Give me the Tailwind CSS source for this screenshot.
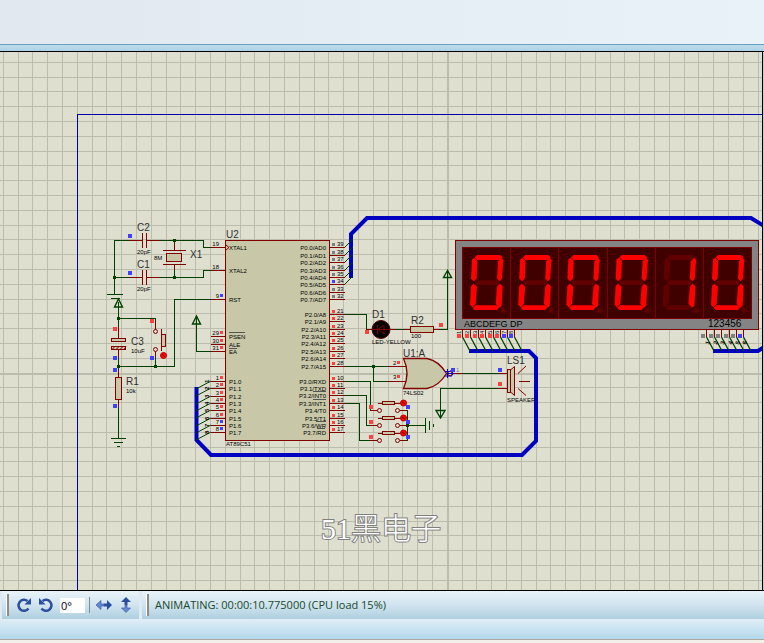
<!DOCTYPE html>
<html lang="en">
<head>
<meta charset="utf-8">
<meta name="viewport" content="width=device-width, initial-scale=1">
<title>Schematic simulation</title>
<script src="https://cdn.jsdelivr.net/npm/@tailwindcss/browser@4"></script>
</head>
<body class="flex min-h-screen flex-col overflow-x-hidden bg-[#e2e9f1] font-['Liberation_Sans',Arial,sans-serif]">
<header class="flex flex-col">
  <div class="h-11 bg-linear-to-r from-[#e1e8f0] to-[#e9f2f9]"></div>
  <div class="h-[7px] border-t border-[#6a9fbf] bg-linear-to-b from-[#bddcec] to-[#aed2e6]"></div>
</header>

<main class="flex min-h-[540px] flex-1 border-y border-black bg-[#dfdfd0]">
  <svg class="block w-0 flex-1 self-stretch overflow-hidden" role="img" aria-label="Circuit schematic">
    <defs>
      <path id="seg-a" d="M74 82L82 75H150L158 82L150 90H82Z"/>
      <path id="seg-b" d="M144 94L155 83L160 90L156 146L149 154L141 146Z"/>
      <path id="seg-c" d="M141 170L149 161L158 168L155 227L148 233L137 222Z"/>
      <path id="seg-d" d="M68 233L76 226H140L148 232L141 240H74Z"/>
      <path id="seg-e" d="M63 168L71 161L81 170L77 222L68 232L60 225Z"/>
      <path id="seg-f" d="M66 88L74 83L82 93L80 145L72 154L63 146Z"/>
      <path id="seg-g" d="M72 158L80 151H142L150 158L142 165H80Z"/>
    </defs>
    <g transform="translate(0 -52)">
      <g id="grid" fill="none" stroke="#bcbcac" shape-rendering="crispEdges"></g>
      <path d="M77.5 2000V114.5H3000" fill="none" stroke="#0000a8" shape-rendering="crispEdges"/>

      <!-- buses -->
      <g fill="none" stroke="#0000c0" stroke-width="4">
        <path d="M351 278V234L367 218H751L764 226"/>
        <path d="M196.500 387V440L211 455H522L536 441V358L529 351H469"/>
        <path d="M713 351H758L764 347"/>
      </g>

      <!-- wires -->
      <g fill="none" stroke="#004000" shape-rendering="crispEdges">
        <path d="M129 240.500H114.500V294M107 294.500H123M111 298.500H120M114.500 277.500H129"/>
        <path d="M160 240.500H203.500V247.500H211M160 277.500H203.500V270.500H211M174.500 240V243M174.500 270V277"/>
        <path d="M118.500 302V327M118.500 318.500H155.500V321M155.500 358V366M118.500 366.500H174.500V299.500H211M118.500 358V370"/>
        <path d="M118.500 407V438M111 438.500H126M114 442.500H123M117 446.500H120"/>
        <path d="M196.500 316V351.500H211"/>
        <path d="M344 314.500H366.500V329.500M396 329.500H404M440 329.500H447.500V271"/>
        <path d="M344 366.500H388M373.500 366V381.500H388"/>
        <path d="M344 381.500H370.500V410.500M344 395.500H366.500V425.500H370M344 403.500H359.500V440.500H370"/>
        <path d="M407.500 410V441M407 425.500H425M425.500 418V433M429.500 421V430M433.500 424V427"/>
        <path d="M463 373.500H500M497 388.500H440.500V418"/>
      </g>
      <g fill="none" stroke="#004000" stroke-width="1.400">
        <path d="M118.500 299L114.500 307H122.500ZM196.500 316L192.500 324H200.500ZM447.500 270.500L443.500 277.500H451.500ZM440.500 418L436 410.500H445Z"/>
      </g>
      <g fill="#004000">
        <path d="M173 239h3v3h-3zM173 276h3v3h-3zM113 276h3v3h-3zM117 317h3v3h-3zM117 365h3v3h-3zM154 365h3v3h-3zM372 365h3v3h-3zM406 424h3v3h-3z"/>
      </g>

      <!-- components -->
      <g fill="#c8c8a8" stroke="#800000" shape-rendering="crispEdges">
        <path d="M129 240.500H142M147 240.500H160M129 277.500H142M147 277.500H160"/>
        <path d="M142.500 233V248M146.500 233V248M142.500 270V285M146.500 270V285M174.500 243V250M174.500 265V270M163 250.500H186M163 264.500H186"/>
        <rect x="166.500" y="253.500" width="15" height="8"/>
        <path d="M118.500 327V338M118.500 349V358M118.500 370V377M118.500 400V407M155.500 321V330M155.500 351V358M161.500 329V351"/>
        <rect x="111.500" y="338.500" width="14" height="3"/>
        <rect x="111.500" y="346.500" width="14" height="3"/>
        <rect x="115.500" y="377.500" width="6" height="22"/>
        <rect x="161.500" y="334.500" width="4" height="12"/>
        <rect x="225.500" y="240.500" width="104" height="200"/>
        <path d="M366 329.500H373M390 329.500H396M404 329.500H411M433 329.500H440"/>
        <rect x="410.500" y="326.500" width="23" height="6"/>
        <path d="M388 366.500H408M388 381.500H408M452 373.500H463M499 373.500H508M497 388.500H508"/>
        <rect x="507.500" y="369.500" width="3" height="23"/>
        <path d="M519 381.500H530"/>
      </g>
      <g stroke="#800000" fill="none">
        <path d="M112 349.500l3-3m1 3l3-3m1 3l3-3m1 3l2-3"/>
        <path d="M226 245l3 2.500-3 2.500"/>
        <path d="M403.500 358.500H427Q439 361 446.500 373.500Q439 386 427 388.500H403.500Q410.500 373.500 403.500 358.500Z" fill="#c8c8a8" stroke-width="1.300"/>
        <path d="M510.500 370L514.500 366.500V395.500L510.500 392Z" fill="#c8c8a8"/>
        <path d="M518 373.500L526 366M518 388.500L526 395.500"/>
      </g>
      <g fill="#dfdfd0" stroke="#800000">
        <circle cx="155.500" cy="331.500" r="2"/><circle cx="155.500" cy="349.500" r="2"/>
        <circle cx="450" cy="373.500" r="2.200"/>
      </g>
      <path d="M447.500 369v9M450.500 370l3 3.500-3 3.500M445 371.500h5M445 376h5M448 373.500h5" stroke="#0000c0" fill="none"/>
      <circle cx="163.500" cy="355.500" r="3" fill="#f00" stroke="#c00000"/>
      <path d="M162 354l3 3" stroke="#600"/>
      <circle cx="381" cy="329.500" r="9" fill="#000" stroke="#500000"/>
      <path d="M372 329.500H390M377.500 325V334M378 329.500L384 325V334Z" fill="none" stroke="#800000"/>
      <g id="switches"></g>

      <!-- display -->
      <rect x="455.500" y="240.500" width="303" height="89" fill="#848484" stroke="#800000" shape-rendering="crispEdges"/>
      <rect x="462.500" y="247.500" width="289" height="71" fill="#400000" stroke="#800000" shape-rendering="crispEdges"/>
      <path d="M510.500 248V318M558.500 248V318M607.500 248V318M655.500 248V318M703.500 248V318" stroke="#800000" shape-rendering="crispEdges"/>
      <g id="digits"></g>

      <g id="pins" font-size="6" fill="#000"></g>
      <path d="M229 332.500H245M229 348.500H237M313 391.500H326M313 399.500H326M316 421.500H326M317 428.500H325" stroke="#555" shape-rendering="crispEdges"/>
      <g id="states"></g>

      <g font-size="10" fill="#303030">
        <text x="137" y="231">C2</text><text x="137" y="268">C1</text><text x="190" y="258">X1</text>
        <text x="131" y="345">C3</text><text x="126" y="385">R1</text><text x="226" y="238">U2</text>
        <text x="372" y="318">D1</text><text x="411" y="324">R2</text><text x="403" y="357">U1:A</text>
        <text x="507" y="364">LS1</text>
      </g>
      <g font-size="6" fill="#000">
        <text x="137" y="254">20pF</text><text x="137" y="291">20pF</text><text x="154" y="260">8M</text>
        <text x="131" y="353">10uF</text><text x="126" y="393">10k</text><text x="226" y="446">AT89C51</text>
        <text x="372" y="344">LED-YELLOW</text><text x="411" y="338">100</text><text x="403" y="395">74LS02</text>
        <text x="507" y="402">SPEAKER</text>
        <text x="393" y="365">2</text><text x="393" y="379">3</text><text x="456" y="372" fill="#777">1</text>
      </g>
      <text x="464" y="327" font-size="9" fill="#000">ABCDEFG DP</text>
      <text x="708" y="327" font-size="10" fill="#000">123456</text>
      <text x="321" y="539" font-size="30" fill="#fff" stroke="#808080" stroke-width="2" paint-order="stroke" class="font-['Liberation_Serif','Noto_Sans_CJK_SC',serif] font-light">51黑电子</text>
    </g>
  </svg>
  <div class="w-[2px] border-l border-black bg-[#b5cfde]"></div>
</main>

<footer class="flex flex-col bg-linear-to-b from-[#e0edf6] to-[#b9d9ea]">
  <div class="flex h-[28px] bg-[#dfe9f1]">
    <div role="toolbar" aria-label="Orientation" class="ml-[2px] flex w-[137px] items-center bg-linear-to-b from-[#e9f3f9] via-[#d1e4ef] to-[#aecfdf]">
      <span class="ml-1 h-[22px] w-[3px] border-r-2 border-[#8f8c87] bg-white"></span>
      <button type="button" aria-label="Rotate clockwise" class="ml-[7px] h-4 w-4">
        <svg viewBox="0 0 16 16" class="h-4 w-4"><path d="M12.500 11.500A5.500 5.500 0 1 1 11.500 4" fill="none" stroke="#2c4f9c" stroke-width="2.500"/><path d="M15 1V7.500H8.500Z" fill="#2c4f9c"/></svg>
      </button>
      <button type="button" aria-label="Rotate anticlockwise" class="ml-[6px] h-4 w-4">
        <svg viewBox="0 0 16 16" class="h-4 w-4"><path d="M3.500 11.500A5.500 5.500 0 1 0 4.500 4" fill="none" stroke="#2c4f9c" stroke-width="2.500"/><path d="M1 1V7.500H7.500Z" fill="#2c4f9c"/></svg>
      </button>
      <input type="text" aria-label="Rotation angle" value="0°" class="ml-[6px] h-[15px] w-[25px] bg-white px-px font-['Open_Sans',sans-serif] text-[11px] leading-none text-black">
      <span class="ml-1 h-4 w-px bg-[#7c8d9a]"></span>
      <button type="button" aria-label="Flip horizontally" class="ml-[6px] h-4 w-4">
        <svg viewBox="0 0 16 16" class="h-4 w-4"><path d="M0 8L5 3.500V7H8V9H5V12.500Z" fill="#6687d4" stroke="#3c5cae" stroke-width=".7"/><path d="M16 8L11 3V6.500H8V9.500H11V13Z" fill="#2a4c9e"/></svg>
      </button>
      <button type="button" aria-label="Flip vertically" class="ml-[6px] h-4 w-4">
        <svg viewBox="0 0 16 16" class="h-4 w-4"><path d="M8 15.500L3.500 11H7V8H9V11H12.500Z" fill="#6687d4" stroke="#3c5cae" stroke-width=".7"/><path d="M8 0L3 5H6.500V8H9.500V5H13Z" fill="#2a4c9e"/></svg>
      </button>
    </div>
    <div class="ml-[3px] flex flex-1 items-center bg-linear-to-b from-[#e9f3f9] via-[#d1e4ef] to-[#aecfdf]">
      <span class="ml-1 h-[22px] w-[3px] border-r-2 border-[#8f8c87] bg-white"></span>
      <p role="status" class="ml-[6px] font-['Open_Sans',sans-serif] text-[11px] whitespace-nowrap text-[#17492a]">ANIMATING: 00:00:10.775000 (CPU load 15%)</p>
    </div>
  </div>
  <div class="h-5 bg-linear-to-b from-[#e0edf6] to-[#b4d8ec]"></div>
  <div class="h-1 border-t border-[#aaa8a0] bg-[#f2f0e8]"></div>
</footer>

<script>
const NS = "http://www.w3.org/2000/svg";
function add(parent, tag, attrs, text) {
  const el = document.createElementNS(NS, tag);
  for (const k in attrs) el.setAttribute(k, attrs[k]);
  if (text !== undefined) el.textContent = text;
  parent.appendChild(el);
  return el;
}
const byId = id => document.getElementById(id);
const RED = "#ff4040", BLUE = "#4040ff", GRAY = "#808080";
const pins = byId("pins"), states = byId("states");
const square = (x, y, size, c) => add(states, "rect", { x: x - 1, y: y - 1, width: size, height: size, fill: c, "shape-rendering": "crispEdges" });
const state = (x, y, c) => square(x, y, 4, c);
const pinState = (x, y, c) => square(x, y, 3, c);
const line = (g, d, c) => add(g, "path", { d, stroke: c, fill: "none", "shape-rendering": "crispEdges" });

// grid, every thirtieth line heavier
let fine = "", bold = "";
for (let i = 0; i < 150; i++) {
  const x = Math.floor(3.2 + i * 14.8), y = Math.floor(62.2 + i * 14.8);
  if (i % 30 === 0 && i) bold += `M${x + .5} 0V2000`; else fine += `M${x + .5} 0V2000`;
  if (i % 30 === 21) bold += `M0 ${y + .5}H3000`; else fine += `M0 ${y + .5}H3000`;
}
add(byId("grid"), "path", { d: fine });
add(byId("grid"), "path", { d: bold, "stroke-width": 2 });

// right-hand chip pins
const right = [
  [247,"P0.0/AD0",39,GRAY],[255,"P0.1/AD1",38,GRAY],[262,"P0.2/AD2",37,GRAY],[270,"P0.3/AD3",36,GRAY],[277,"P0.4/AD4",35,GRAY],[284,"P0.5/AD5",34,BLUE],[292,"P0.6/AD6",33,GRAY],[299,"P0.7/AD7",32,GRAY],
  [314,"P2.0/A8",21,RED],[321,"P2.1/A9",22,RED],[329,"P2.2/A10",23,RED],[336,"P2.3/A11",24,RED],[343,"P2.4/A12",25,RED],[351,"P2.5/A13",26,RED],[358,"P2.6/A14",27,RED],[366,"P2.7/A15",28,RED],
  [381,"P3.0/RXD",10,RED],[388,"P3.1/TXD",11,RED],[395,"P3.2/INT0",12,RED],[403,"P3.3/INT1",13,RED],[410,"P3.4/T0",14,RED],[418,"P3.5/T1",15,RED],[425,"P3.6/WR",16,RED],[432,"P3.7/RD",17,RED]];
right.forEach(([y, label, n, c], i) => {
  line(pins, `M330 ${y + .5}H345`, "#800000");
  add(pins, "text", { x: 326, y: y + 3, "text-anchor": "end" }, label);
  add(pins, "text", { x: 337, y: y - 1 }, n);
  pinState(333, y - 3, c);
  if (i < 6) add(pins, "path", { d: `M345 ${y}L353 ${y - 8}`, stroke: "#004000" });
});

// left-hand chip pins
const left = [
  [247,"XTAL1",19],[270,"XTAL2",18],[299,"RST",9,BLUE],[336,"PSEN",29,RED],[344,"ALE",30,RED],[351,"EA",31,RED],
  [381,"P1.0",1,RED],[388,"P1.1",2,RED],[396,"P1.2",3,RED],[403,"P1.3",4,RED],[410,"P1.4",5,RED],[418,"P1.5",6,RED],[425,"P1.6",7,BLUE],[432,"P1.7",8,BLUE]];
left.forEach(([y, label, n, c], i) => {
  line(pins, `M211 ${y + .5}H225`, "#800000");
  add(pins, "text", { x: 229, y: y + 3 }, label);
  add(pins, "text", { x: 219, y: y - 1, "text-anchor": "end" }, n);
  if (c) pinState(221, y - 4, c);
  if (i > 5) {
    add(pins, "path", { d: `M196 ${y + 8}L211 ${y}`, stroke: "#004000" });
    add(pins, "text", { transform: `translate(209 ${y + 2}) rotate(-90)`, "font-weight": "bold" }, i - 5);
  }
});

// display pins
[462, 470, 478, 485, 493, 500, 507, 514].forEach((x, i) => {
  line(pins, `M${x + .5} 330V337`, "#800000");
  add(pins, "path", { d: `M${x + .5} 337L${x + 8} 351`, stroke: "#004000", "stroke-width": 1.3 });
  add(pins, "text", { transform: `translate(${x - 1} 334) rotate(-90)` }, i + 1);
  state(x - 4, 335, i < 6 ? RED : BLUE);
});
[706, 714, 721, 729, 736, 743].forEach((x, i) => {
  line(pins, `M${x + .5} 330V337`, "#800000");
  add(pins, "path", { d: `M${x + .5} 337L${x + 8} 351`, stroke: "#004000", "stroke-width": 1.3 });
  add(pins, "text", { transform: `translate(${x + 3} 345) rotate(-70)`, "font-weight": "bold" }, i + 1);
  state(x - 4, 335, i < 5 ? GRAY : BLUE);
});

// logic states on discrete parts
[[129,235,BLUE],[129,272,BLUE],[114,328,RED],[151,320,RED],[114,357,BLUE],[151,357,BLUE],[114,369,BLUE],[114,405,BLUE],[366,331,RED],[440,324,RED],[452,369,BLUE],[499,369,BLUE],[499,383,RED]].forEach(s => state(...s));
pinState(398, 362, RED);
pinState(398, 376, RED);

// push buttons
[410, 425, 440].forEach(y => {
  const g = byId("switches");
  line(g, `M370 ${y + .5}H378M400 ${y + .5}H407M378 ${y - 6.5}H403`, "#800000");
  add(g, "rect", { x: 382.5, y: y - 8.5, width: 12, height: 3, fill: "#c8c8a8", stroke: "#800000", "shape-rendering": "crispEdges" });
  for (const x of [379.5, 397.5]) add(g, "circle", { cx: x, cy: y + .5, r: 2, fill: "#dfdfd0", stroke: "#800000" });
  add(g, "circle", { cx: 403.5, cy: y - 7, r: 3, fill: "#f00", stroke: "#c00000" });
  add(g, "path", { d: `M402 ${y - 8}l3 2`, stroke: "#600" });
  state(370, y - 4, RED);
  state(407, y - 4, BLUE);
});

// seven-segment digits
const lit = { 0: "abcdef", 1: "bc" };
[..."000010"].forEach((d, i) => {
  const g = add(byId("digits"), "g", { transform: `translate(${450 + i * 48.2} 230) scale(.3333)` });
  for (const s of "gabcdef") add(g, "use", { href: "#seg-" + s, fill: lit[d].includes(s) ? "#ff0000" : "#600000" });
  add(g, "circle", { cx: 160, cy: 241, r: 8, fill: "#600000" });
});
</script>
</body>
</html>
